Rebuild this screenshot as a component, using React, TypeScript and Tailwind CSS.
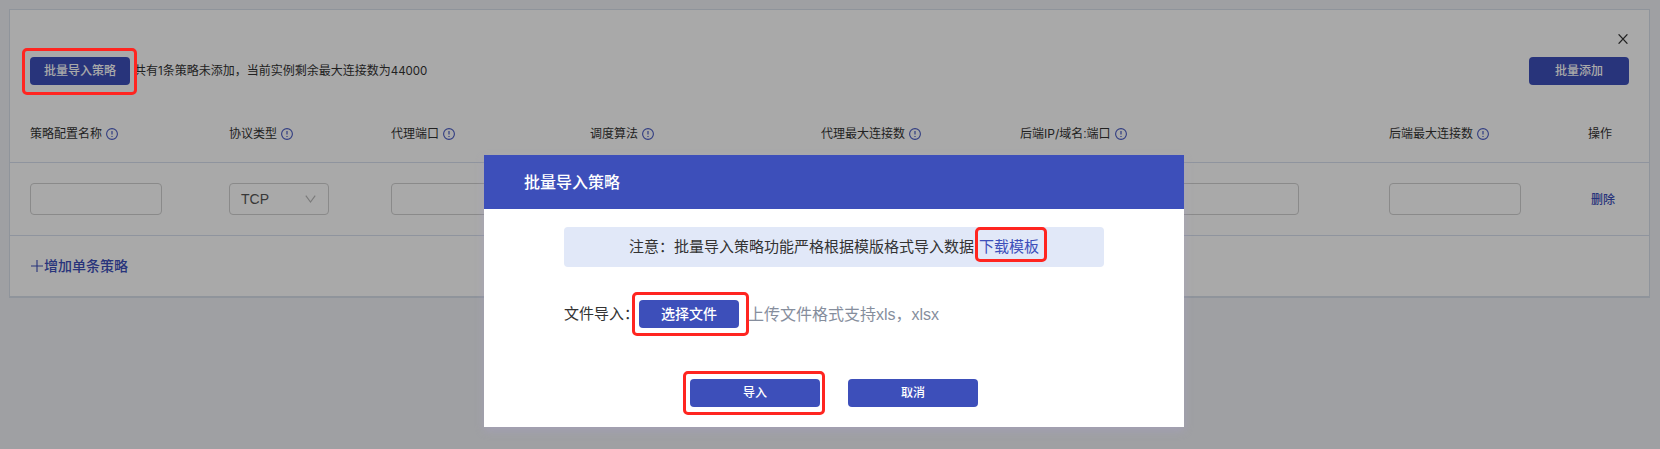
import React from "react";

const columns = [
  "策略配置名称",
  "协议类型",
  "代理端口",
  "调度算法",
  "代理最大连接数",
  "后端",
  "后端最大连接数",
];

const gridClass =
  "grid grid-cols-[199px_162px_199px_231px_199px_369px_199px_1fr] items-center border-b border-[#d8dfef] pl-5";

function InfoIcon() {
  return (
    <svg className="ml-1 size-3 shrink-0" viewBox="0 0 12 12" fill="none" stroke="#4a5cc4">
      <circle cx="6" cy="6" r="5.4" strokeWidth="1.1" />
      <path d="M6 2.9v3.7M6 7.9v1.2" strokeWidth="1.2" />
    </svg>
  );
}

function Button({ className = "", children }: { className?: string; children: React.ReactNode }) {
  return (
    <button
      className={`flex h-7 shrink-0 items-center justify-center rounded-[4px] bg-[#3d4fba] font-medium text-white ${className}`}
    >
      {children}
    </button>
  );
}

function Mark({ className }: { className: string }) {
  return <span className={`pointer-events-none absolute rounded-[5px] border-3 border-[#ff2520] ${className}`} />;
}

function Field({ className = "w-[132px]" }: { className?: string }) {
  return <div className={`h-8 rounded-[4px] border border-[#d0d0d0] ${className}`} />;
}

export default function App() {
  return (
    <div className="relative h-[449px] w-[1660px] overflow-hidden bg-[#f0f1f6] font-['Liberation_Sans','Noto_Sans_CJK_SC',sans-serif] text-xs leading-5 text-[#333]">
      <div className="pt-[9px] pr-[10px] pl-[9px]">
        <div className="h-[289px] border border-b-2 border-[#d8dfea] bg-white">
          <div className="flex h-[46px] items-end justify-end pr-[21px] pb-3">
            <svg className="size-[10px]" viewBox="0 0 10 10" fill="none" stroke="#333" strokeWidth="1.2">
              <path d="M.6.3l8.8 9.4M9.4.3L.6 9.7" />
            </svg>
          </div>
          <div className="mt-px flex h-7 items-center justify-between px-5">
            <div className="flex items-center">
              <Button className="w-[100px]">批量导入策略</Button>
              <span className="ml-1">
                共有<span className="font-[Inter] text-[11.5px]">1</span>条策略未添加，当前实例剩余最大连接数为
                <span className="font-[Inter] text-[11.5px]">44000</span>
              </span>
            </div>
            <Button className="w-[100px]">批量添加</Button>
          </div>

          <div className={`${gridClass} h-[78px] pt-5`}>
            {columns.map((c, i) => (
              <div key={i} className="flex items-center">
                {i === 5 ? (
                  <span>
                    后端<span className="font-[Inter]">IP/</span>域名:端口
                  </span>
                ) : (
                  <span>{c}</span>
                )}
                <InfoIcon />
              </div>
            ))}
            <span>操作</span>
          </div>

          <div className={`${gridClass} h-[73px]`}>
            <Field />
            <div className="flex h-8 w-[100px] items-center justify-between rounded-[4px] border border-[#d0d0d0] pr-3 pl-[11px] text-sm text-[#555]">
              TCP
              <svg className="h-2 w-[11px]" viewBox="0 0 11 8" fill="none" stroke="#bbb" strokeWidth="1.2">
                <path d="M.8.7l4.7 6.3L10.2.7" />
              </svg>
            </div>
            <Field />
            <Field />
            <Field />
            <Field className="w-[279px]" />
            <Field />
            <span className="pt-[2px] pl-[3px] font-medium text-[#3d4fba]">删除</span>
          </div>

          <div className="flex h-[60px] items-center pl-5 text-sm font-medium text-[#3d4fba]">
            <svg className="mr-px ml-px size-3" viewBox="0 0 12 12" stroke="#3d4fba" strokeWidth="1.1">
              <path d="M6 0v12M0 6h12" />
            </svg>
            增加单条策略
          </div>
        </div>
      </div>

      <div className="absolute inset-0 bg-black/[0.337]" />
      <Mark className="top-[48px] left-[22px] h-[47px] w-[115px]" />

      <div className="absolute top-[155px] left-[484px] h-[272px] w-[700px] bg-white text-[15px] shadow-[0_4px_8px_rgba(168,160,200,0.45)]">
        <div className="flex h-[54px] items-center bg-[#3d4fba] pt-px pl-10 text-base font-medium text-white">批量导入策略</div>
        <div className="mx-20 mt-[18px] flex h-10 items-center justify-center rounded-[4px] bg-[#e1e8f8]">
          <span>注意：批量导入策略功能严格根据模版格式导入数据</span>
          <span className="relative ml-[5px] text-[#3d4fba]">
            下载模板
            <Mark className="-top-[10px] -left-1 h-[35px] w-[72px]" />
          </span>
        </div>
        <div className="mt-[33px] flex h-7 items-center pl-20">
          <span className="w-[75px] whitespace-nowrap">文件导入：</span>
          <div className="relative">
            <Button className="w-[100px] text-sm">选择文件</Button>
            <Mark className="-top-2 -left-[7px] h-[44px] w-[117px]" />
          </div>
          <span className="ml-[9px] pt-px text-base text-[#868e9d]">上传文件格式支持xls，xlsx</span>
        </div>
        <div className="mt-[51px] flex gap-7 pl-[206px]">
          <div className="relative">
            <Button className="w-[130px] text-xs">导入</Button>
            <Mark className="-top-2 -left-[7px] h-[44px] w-[142px]" />
          </div>
          <Button className="w-[130px] text-xs">取消</Button>
        </div>
      </div>
    </div>
  );
}
